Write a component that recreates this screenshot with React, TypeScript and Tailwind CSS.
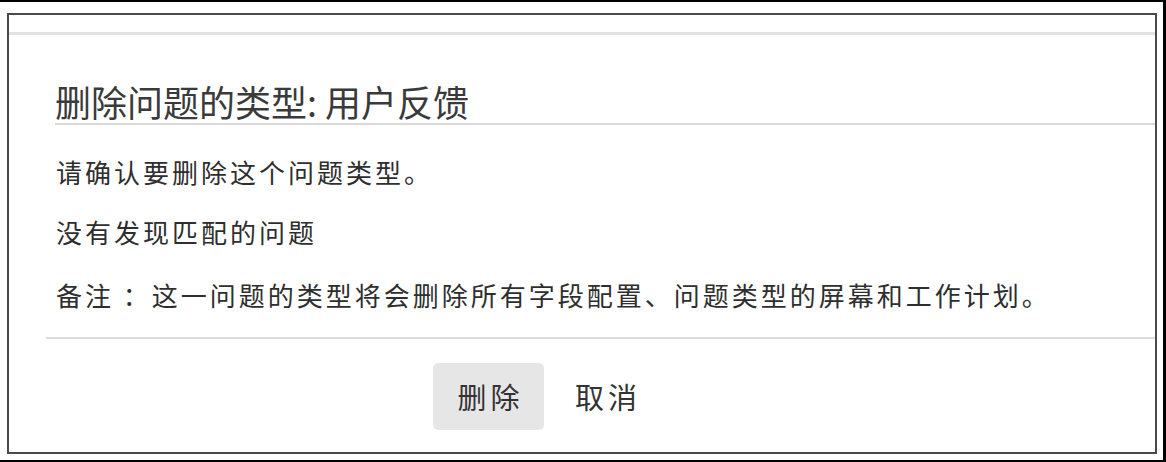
export default function App() {
  return (
    <div className="w-[1166px] h-[462px] bg-white border-t-2 border-r-[3px] border-b-2 border-black pt-[11px] pl-[7px] pr-[6px] pb-[6px] font-['Noto_Sans_CJK_SC','Microsoft_YaHei',sans-serif] text-[#2e2e2e]">
      <div className="h-full border-2 border-[#4a4a4a] flex flex-col">
        <div className="h-[17px]" />
        <div className="h-[3px] bg-[#e2e2e2]" />

        <h2 className="mt-[44px] ml-[46px] border-b-2 border-[#d8d8d8] text-[36px] leading-[44px] font-normal text-[#3a3a3a]">
          删除问题的类型: 用户反馈
        </h2>

        <div className="ml-[47px] text-[26px] leading-[30px] tracking-[3px]">
          <p className="mt-[32px]">请确认要删除这个问题类型。</p>
          <p className="mt-[30px]">没有发现匹配的问题</p>
          <p className="mt-[33px]">备注 ：这一问题的类型将会删除所有字段配置、问题类型的屏幕和工作计划。</p>
        </div>

        <div className="mt-[27px] ml-[37px] h-[2px] bg-[#dcdcdc]" />

        <div className="mt-[24px] ml-[424px] flex items-center gap-[20px]">
          <button
            type="button"
            className="w-[111px] h-[67px] rounded-[5px] bg-[#e6e6e6] text-[29px] tracking-[4px] text-[#333] pl-[4px]"
          >
            删除
          </button>
          <button type="button" className="h-[67px] px-[11px] text-[29px] tracking-[4px] text-[#333]">
            取消
          </button>
        </div>
      </div>
    </div>
  );
}
